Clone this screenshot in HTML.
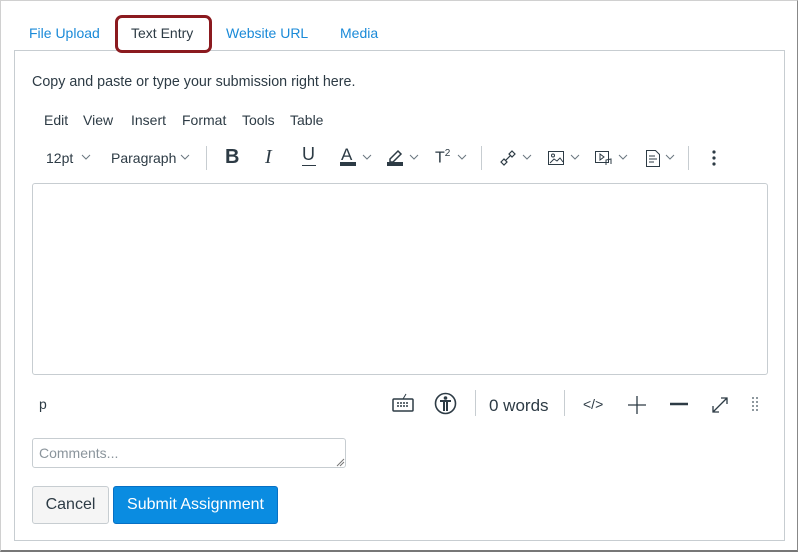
<!DOCTYPE html>
<html><head><meta charset="utf-8"><style>
*{margin:0;padding:0;box-sizing:border-box}
body{width:799px;height:554px;background:#fff;font-family:"Liberation Sans",sans-serif;position:relative;overflow:hidden;color:#2d3b45}
.frame{position:absolute;left:0;top:0;width:798px;height:552px;border:1px solid #d0d0d0;border-right-color:#888;border-bottom:2px solid #777}
.a{position:absolute;white-space:nowrap}
.tab{color:#1a8ad8;font-size:14px;top:25px}
.panel{position:absolute;left:14px;top:50px;width:771px;height:491px;border:1px solid #c7cdd1}
.t{font-size:14px;color:#2d3b45}
.sep{position:absolute;width:1px;background:#c7cdd1}
svg{position:absolute;overflow:visible}
</style></head><body>
<div class="frame"></div>
<div class="a tab" style="left:29px">File Upload</div>
<div class="a" style="left:115px;top:15px;width:97px;height:38px;border:3px solid #8b1a1f;border-radius:7px;background:#fff;z-index:2"></div>
<div class="a t" style="left:131px;top:25px;z-index:3">Text Entry</div>
<div class="a tab" style="left:226px">Website URL</div>
<div class="a tab" style="left:340px">Media</div>
<div class="panel"></div>
<div class="a t" style="left:32px;top:74px;font-size:14.3px">Copy and paste or type your submission right here.</div>
<div class="a t" style="left:44px;top:112px">Edit</div>
<div class="a t" style="left:83px;top:112px">View</div>
<div class="a t" style="left:131px;top:112px">Insert</div>
<div class="a t" style="left:182px;top:112px">Format</div>
<div class="a t" style="left:242px;top:112px">Tools</div>
<div class="a t" style="left:290px;top:112px">Table</div>
<div class="a t" style="left:46px;top:150px">12pt</div>
<svg style="left:81px;top:154px" width="10" height="6"><path d="M1 1l4 4 4-4" stroke="#6b7780" fill="none"/></svg>
<div class="a t" style="left:111px;top:150px">Paragraph</div>
<svg style="left:180px;top:154px" width="10" height="6"><path d="M1 1l4 4 4-4" stroke="#6b7780" fill="none"/></svg>
<div class="sep" style="left:206px;top:146px;height:24px"></div>
<div class="a" style="left:225px;top:146px;font-size:20px;font-weight:bold">B</div>
<div class="a" style="left:265px;top:146px;font-size:20px;font-style:italic;font-family:'Liberation Serif',serif">I</div>
<div class="a" style="left:302px;top:144px;font-size:18px">U</div>
<div class="a" style="left:302px;top:165px;width:14px;height:1px;background:#2d3b45"></div>
<div class="a" style="left:341px;top:145px;font-size:17px">A</div>
<div class="a" style="left:340px;top:162px;width:16px;height:4px;background:#2d3b45"></div>
<svg style="left:362px;top:154px" width="10" height="6"><path d="M1 1l4 4 4-4" stroke="#6b7780" fill="none"/></svg>
<svg style="left:387px;top:148px" width="16" height="18"><path d="M3 11l8-8 3 3-8 8H3z" stroke="#2d3b45" fill="none" stroke-width="1.5"/><rect x="0" y="14" width="16" height="4" fill="#2d3b45"/></svg>
<svg style="left:409px;top:154px" width="10" height="6"><path d="M1 1l4 4 4-4" stroke="#6b7780" fill="none"/></svg>
<div class="a" style="left:435px;top:148px;font-size:16px">T<sup style="font-size:10px">2</sup></div>
<svg style="left:457px;top:154px" width="10" height="6"><path d="M1 1l4 4 4-4" stroke="#6b7780" fill="none"/></svg>
<div class="sep" style="left:481px;top:146px;height:24px"></div>
<svg style="left:500px;top:150px" width="16" height="16"><path d="M1 12l3-3 3 3-3 3zM9 4l3-3 3 3-3 3zM5 11l6-6" stroke="#2d3b45" fill="none" stroke-width="1.2"/></svg>
<svg style="left:522px;top:154px" width="10" height="6"><path d="M1 1l4 4 4-4" stroke="#6b7780" fill="none"/></svg>
<svg style="left:548px;top:151px" width="16" height="14"><rect x=".5" y=".5" width="15" height="13" stroke="#2d3b45" fill="none"/><circle cx="5" cy="4.5" r="1.5" stroke="#2d3b45" fill="none"/><path d="M2 12l4-4 3 2 3-3 3 4" stroke="#2d3b45" fill="none"/></svg>
<svg style="left:570px;top:154px" width="10" height="6"><path d="M1 1l4 4 4-4" stroke="#6b7780" fill="none"/></svg>
<svg style="left:595px;top:151px" width="18" height="15"><rect x=".5" y=".5" width="13" height="11" stroke="#2d3b45" fill="none"/><path d="M5 3v6l4-3z" stroke="#2d3b45" fill="none"/><path d="M11 14v-5l5-1v5" stroke="#2d3b45" fill="none"/></svg>
<svg style="left:618px;top:154px" width="10" height="6"><path d="M1 1l4 4 4-4" stroke="#6b7780" fill="none"/></svg>
<svg style="left:646px;top:150px" width="14" height="17"><path d="M.5.5h9l4 4v12H.5z" stroke="#2d3b45" fill="none"/><path d="M3 6h6M3 9h8M3 12h5" stroke="#2d3b45"/></svg>
<svg style="left:665px;top:154px" width="10" height="6"><path d="M1 1l4 4 4-4" stroke="#6b7780" fill="none"/></svg>
<div class="sep" style="left:688px;top:146px;height:24px"></div>
<svg style="left:712px;top:150px" width="4" height="16"><circle cx="2" cy="2" r="1.6" fill="#2d3b45"/><circle cx="2" cy="8" r="1.6" fill="#2d3b45"/><circle cx="2" cy="14" r="1.6" fill="#2d3b45"/></svg>
<div class="a" style="left:32px;top:183px;width:736px;height:192px;border:1px solid #c7cdd1;border-radius:3px"></div>
<div class="a t" style="left:39px;top:396px">p</div>
<svg style="left:392px;top:393px" width="22" height="20"><path d="M11 6l3-5" stroke="#2d3b45"/><rect x="1" y="6" width="20" height="12" rx="1" stroke="#2d3b45" fill="none" stroke-width="1.5"/><path d="M5 10h12M5 13h12" stroke="#2d3b45" stroke-width="1.6" stroke-dasharray="2 1"/></svg>
<svg style="left:434px;top:392px" width="23" height="23"><circle cx="11.5" cy="11.5" r="10" stroke="#2d3b45" fill="none" stroke-width="1.6"/><circle cx="11.5" cy="6" r="1.8" fill="#2d3b45"/><path d="M6 9h11M10 9v10M13 9v10" stroke="#2d3b45" stroke-width="2"/></svg>
<div class="sep" style="left:475px;top:390px;height:26px"></div>
<div class="a" style="left:489px;top:396px;font-size:17px">0 words</div>
<div class="sep" style="left:564px;top:390px;height:26px"></div>
<div class="a" style="left:583px;top:396px;font-size:14px">&lt;/&gt;</div>
<svg style="left:628px;top:396px" width="18" height="18"><path d="M9 0v18M0 9h18" stroke="#2d3b45" stroke-width="1.3"/></svg>
<svg style="left:670px;top:402px" width="18" height="4"><path d="M0 2h18" stroke="#2d3b45" stroke-width="2.5"/></svg>
<svg style="left:711px;top:396px" width="18" height="18"><path d="M2 16L16 2M10 2h6v6M2 10v6h6" stroke="#2d3b45" fill="none" stroke-width="1.3"/></svg>
<svg style="left:751px;top:396px" width="8" height="18"><g fill="#6b7780"><circle cx="2" cy="2" r="1"/><circle cx="6" cy="2" r="1"/><circle cx="2" cy="6" r="1"/><circle cx="6" cy="6" r="1"/><circle cx="2" cy="10" r="1"/><circle cx="6" cy="10" r="1"/><circle cx="2" cy="14" r="1"/><circle cx="6" cy="14" r="1"/></g></svg>
<div class="a" style="left:32px;top:438px;width:314px;height:30px;border:1px solid #c7cdd1;border-radius:3px"></div>
<div class="a" style="left:39px;top:445px;font-size:14px;color:#8b959c">Comments...</div>
<svg style="left:337px;top:459px" width="7" height="7"><path d="M0 7L7 0M3 7L7 3" stroke="#777"/></svg>
<div class="a" style="left:32px;top:486px;width:77px;height:38px;background:#f5f5f5;border:1px solid #c7cdd1;border-radius:3px;font-size:16px;text-align:center;line-height:36px">Cancel</div>
<div class="a" style="left:113px;top:486px;width:165px;height:38px;background:#0a8ce1;border:1px solid #0770c4;border-radius:3px;font-size:16px;color:#fff;text-align:center;line-height:36px">Submit Assignment</div>
</body></html>
